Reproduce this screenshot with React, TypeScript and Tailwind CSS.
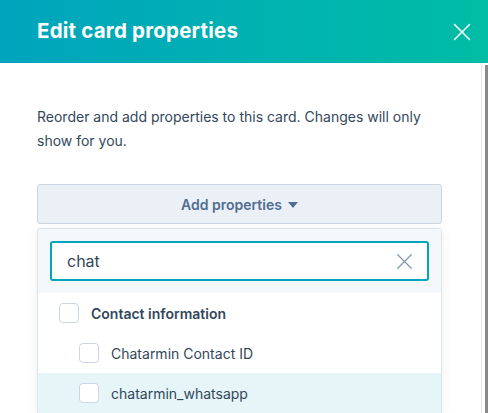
import { X } from "lucide-react";

const rows = [
  { label: "Chatarmin Contact ID", active: false },
  { label: "chatarmin_whatsapp", active: true },
];

function Checkbox() {
  return <span className="h-5 w-5 shrink-0 rounded-[4px] border border-[#cbd6e2] bg-white" />;
}

export default function App() {
  return (
    <div className="flex h-[413px] w-[488px] flex-col overflow-hidden bg-white font-['Inter',sans-serif] text-[#33475b]">
      <header className="flex h-[63px] shrink-0 items-center justify-between bg-gradient-to-r from-[#00a4bd] to-[#00bda5] pl-[37px] pr-[11px]">
        <h1 className="text-[20.5px] font-bold tracking-[0.2px] text-white">Edit card properties</h1>
        <X className="h-[30px] w-[30px] text-white" strokeWidth={1.2} />
      </header>

      <div className="flex min-h-0 flex-1">
        <main className="flex-1 pl-[37px] pr-[39px] pt-[42px]">
          <p className="text-[14px] leading-[24px]">
            Reorder and add properties to this card. Changes will only show for you.
          </p>

          <button className="mt-[31px] flex h-[40px] w-full items-center justify-center gap-[6px] rounded-[3px] border border-[#cbd6e2] bg-[#eaf0f6] text-[14px] font-semibold text-[#506e91]">
            Add properties
            <svg width="10" height="6" viewBox="0 0 10 6" className="mt-[1px]">
              <path d="M0 0h10L5 6z" fill="#506e91" />
            </svg>
          </button>

          <div className="mt-[4px] overflow-hidden rounded-t-[3px] border border-[#dfe3eb] bg-white shadow-[0_2px_12px_rgba(45,62,80,0.08)]">
            <div className="bg-[#f5f8fa] px-[12px] pb-[12px] pt-[12px]">
              <div className="flex h-[40px] items-center rounded-[3px] border-2 border-[#00a4bd] bg-white pl-[15px] pr-[9px]">
                <span className="flex-1 text-[16px] text-[#33475b]">chat</span>
                <X className="h-[27px] w-[27px] text-[#7c98b6]" strokeWidth={1.1} />
              </div>
            </div>

            <div className="flex h-[40px] items-center gap-[12px] pl-[21px]">
              <Checkbox />
              <span className="text-[14px] font-semibold">Contact information</span>
            </div>
            {rows.map((r) => (
              <div
                key={r.label}
                className={
                  r.active
                    ? "flex h-[40px] items-center gap-[12px] bg-[#e5f5f8] pl-[41px]"
                    : "flex h-[40px] items-center gap-[12px] pl-[41px]"
                }
              >
                <Checkbox />
                <span className="text-[14px]">{r.label}</span>
              </div>
            ))}
          </div>
        </main>

        <div className="flex w-[7px] shrink-0 justify-end border-l border-[#e6e6e6] pt-[2px]">
          <div className="h-full w-[3px] bg-[#8a8a8a]" />
        </div>
      </div>
    </div>
  );
}
